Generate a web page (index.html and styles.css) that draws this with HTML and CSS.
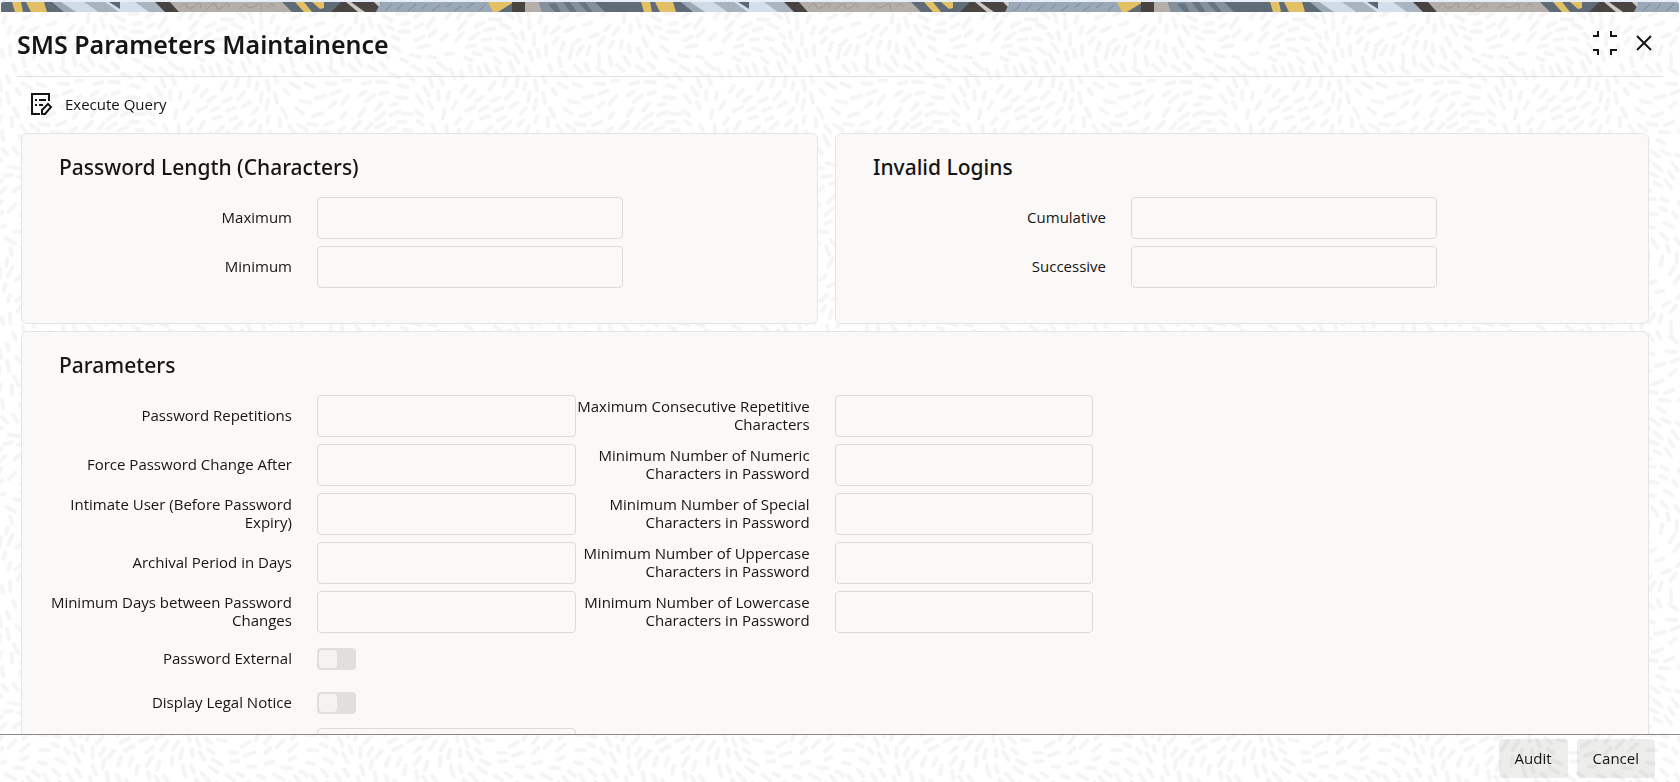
FILE: index.html
```html
<!DOCTYPE html>
<html lang="en">
<head>
    <meta charset="UTF-8">
    <meta name="viewport" content="width=device-width, initial-scale=1.0">
    <title>SMS Parameters Maintainence</title>
    <link rel="stylesheet" href="styles.css">
</head>
<body>
    <!-- Dash texture behind the whole window -->
    <svg class="texture" aria-hidden="true">
        <defs>
            <pattern id="dashes" width="268" height="268" patternUnits="userSpaceOnUse">
                <path id="dash-path" class="dash"/>
            </pattern>
        </defs>
        <rect width="100%" height="100%" fill="url(#dashes)"/>
    </svg>

    <div class="window">
        <!-- Decorative strip -->
        <svg class="strip" aria-hidden="true">
            <defs>
                <pattern id="strip" width="629" height="10" patternUnits="userSpaceOnUse">
                    <rect width="629" height="10" fill="#5f6c77"/>
                    <path d="M11 0h9l2 10h-8zM25 0h18l3 10H30z" fill="#e3c063"/>
                    <path d="M51 0h12l12 10H63z" fill="#9ba8b6"/>
                    <path d="M60 0h25l13 10H75z" fill="#d1dbe8"/>
                    <path d="M83 0h22l14 10H98z" fill="#a9b3be"/>
                    <path d="M104 0h38l10 10h-34z" fill="#d4dfed"/>
                    <path d="M108 0h11v7z" fill="#5b6772"/>
                    <path d="M134 0h22l10 10h-18z" fill="#aab5c1"/>
                    <path d="M154 0h15l9 10h-14z" fill="#484340"/>
                    <path d="M169 0h112l10 10H178z" fill="#b4ada8"/>
                    <path d="M178 6c5-5 8-5 8-2s5 3 9-1 6 0 4 3M206 7c5-5 9-7 9-3s6 3 9-1 5 1 3 3M238 7c4-5 8-6 8-3s6 2 10-1 5 0 4 4M266 5c4-4 7-4 7 0" fill="none" stroke="#9d968f"/>
                    <path d="M294 0h9l8 10h-8zM311 0h12v6l-4 1z" fill="#e3c063"/>
                    <path d="M340 0h38v10h-48z" fill="#4a4542"/>
                    <path d="M345 0h5l14 10h-7zM373 0h6v6z" fill="#cdc8c4"/>
                    <path d="M380 0h109l4 10H375z" fill="#9aa8b7"/>
                    <path d="M384 9l7-7M396 8l6-6M407 9l8-7M421 7l5-5M431 9l8-6M445 5l6-4M453 9l7-5M466 6l7-5M478 9l6-6" fill="none" stroke="#77869a"/>
                    <path d="M487 0h26l-16 10h-5z" fill="#e3c063"/>
                    <path d="M511 0h13v10h-13z" fill="#4a4441"/>
                    <path d="M524 0h14l3 10h-17z" fill="#b6aeaa"/>
                    <path d="M538 0h56l10 10h-63z" fill="#85909d"/>
                    <path d="M547 2l7 8h6l-5-9zM562 0l7 10h7l-7-10zM577 0l9 10h6l-8-10z" fill="#697580"/>
                </pattern>
            </defs>
            <rect width="100%" height="100%" fill="url(#strip)"/>
        </svg>

        <header class="titlebar">
            <h1>SMS Parameters Maintainence</h1>
            <div class="window-actions">
                <button type="button" class="icon-btn" aria-label="Restore">
                    <svg width="24" height="24" viewBox="0 0 24 24"><path d="M0 5h5V0M24 5h-6V0M0 19h5v5M24 19h-6v5"/></svg>
                </button>
                <button type="button" class="icon-btn" aria-label="Close">
                    <svg width="24" height="24" viewBox="0 0 24 24"><path d="M5 5l14 14M19 5L5 19"/></svg>
                </button>
            </div>
        </header>

        <div class="toolbar">
            <button type="button" class="tool-btn">
                <svg width="24" height="24" viewBox="0 0 24 24">
                    <path d="M11 22H3V2h17v7"/>
                    <path d="M6 8h2M10 8h7M6 13h2M10 13h4"/>
                    <path d="M13 22v-4l6-6 3 3-6 7z"/>
                </svg>
                Execute Query
            </button>
        </div>

        <main class="content">
            <div class="card-row">
                <section class="card">
                    <h2>Password Length (Characters)</h2>
                    <div class="fields fields-wide">
                        <div class="field">
                            <label for="maximum">Maximum</label>
                            <input type="text" id="maximum">
                        </div>
                        <div class="field">
                            <label for="minimum">Minimum</label>
                            <input type="text" id="minimum">
                        </div>
                    </div>
                </section>
                <section class="card">
                    <h2>Invalid Logins</h2>
                    <div class="fields fields-wide">
                        <div class="field">
                            <label for="cumulative">Cumulative</label>
                            <input type="text" id="cumulative">
                        </div>
                        <div class="field">
                            <label for="successive">Successive</label>
                            <input type="text" id="successive">
                        </div>
                    </div>
                </section>
            </div>

            <section class="card">
                <h2>Parameters</h2>
                <div class="columns">
                    <div class="fields">
                        <div class="field">
                            <label for="repetitions">Password Repetitions</label>
                            <input type="text" id="repetitions">
                        </div>
                        <div class="field">
                            <label for="force-change">Force Password Change After</label>
                            <input type="text" id="force-change">
                        </div>
                        <div class="field">
                            <label for="intimate">Intimate User (Before Password Expiry)</label>
                            <input type="text" id="intimate">
                        </div>
                        <div class="field">
                            <label for="archival">Archival Period in Days</label>
                            <input type="text" id="archival">
                        </div>
                        <div class="field">
                            <label for="min-days">Minimum Days between Password Changes</label>
                            <input type="text" id="min-days">
                        </div>
                        <div class="field field-switch">
                            <label for="external">Password External</label>
                            <input type="checkbox" id="external" class="switch">
                        </div>
                        <div class="field field-switch">
                            <label for="legal">Display Legal Notice</label>
                            <input type="checkbox" id="legal" class="switch">
                        </div>
                        <div class="field">
                            <span></span>
                            <input type="text">
                        </div>
                    </div>
                    <div class="fields">
                        <div class="field">
                            <label for="max-repeat">Maximum Consecutive Repetitive Characters</label>
                            <input type="text" id="max-repeat">
                        </div>
                        <div class="field">
                            <label for="min-numeric">Minimum Number of Numeric Characters in Password</label>
                            <input type="text" id="min-numeric">
                        </div>
                        <div class="field">
                            <label for="min-special">Minimum Number of Special Characters in Password</label>
                            <input type="text" id="min-special">
                        </div>
                        <div class="field">
                            <label for="min-upper">Minimum Number of Uppercase Characters in Password</label>
                            <input type="text" id="min-upper">
                        </div>
                        <div class="field">
                            <label for="min-lower">Minimum Number of Lowercase Characters in Password</label>
                            <input type="text" id="min-lower">
                        </div>
                    </div>
                </div>
            </section>
        </main>

        <footer class="footer">
            <button type="button" class="btn">Audit</button>
            <button type="button" class="btn">Cancel</button>
        </footer>
    </div>

    <script>
        // Fill the texture tile with short strokes that follow a repeating flow field
        const size = 268;
        const turn = Math.PI * 2 / size;
        let seed = 11;

        function random() {
            seed = (seed * 16807) % 2147483647;
            return seed / 2147483647;
        }

        function wrap(d) {
            return d - size * Math.round(d / size);
        }

        const dashes = [];
        for (let i = 0; i < 20000; i++) {
            const x = random() * size;
            const y = random() * size;
            const angle = 0.9 + 1.1 * Math.sin(turn * (x + y)) + 0.8 * Math.cos(turn * (2 * y - x)) + (random() - 0.5) * 0.3;
            const free = dashes.every(d => {
                const dx = wrap(x - d.x);
                const dy = wrap(y - d.y);
                const along = (dx * Math.cos(d.angle) + dy * Math.sin(d.angle)) / 15;
                const across = (dy * Math.cos(d.angle) - dx * Math.sin(d.angle)) / 8;
                return along * along + across * across > 1;
            });
            if (free) {
                dashes.push({ x, y, angle, half: 3 + random() * 2.5 });
            }
        }

        let path = '';
        for (const d of dashes) {
            const dx = Math.cos(d.angle) * d.half;
            const dy = Math.sin(d.angle) * d.half;
            // repeat on the far side so strokes continue across the tile edge
            for (const ox of [-size, 0, size]) {
                for (const oy of [-size, 0, size]) {
                    const x = d.x + ox;
                    const y = d.y + oy;
                    if (x > -10 && x < size + 10 && y > -10 && y < size + 10) {
                        path += `M${(x - dx).toFixed(1)} ${(y - dy).toFixed(1)}L${(x + dx).toFixed(1)} ${(y + dy).toFixed(1)}`;
                    }
                }
            }
        }
        document.getElementById('dash-path').setAttribute('d', path);
    </script>
</body>
</html>
```

FILE: styles.css
```css
/* Basic reset and font setup */
* {
    margin: 0;
    padding: 0;
    box-sizing: border-box;
}
body {
    font-family: "Open Sans", "Noto Sans", sans-serif;
    font-size: 15px;
    line-height: 18px;
    color: #161513;
    background-color: #fff;
}
button, input {
    font: inherit;
    color: inherit;
}

/* Background texture */
.texture {
    position: fixed;
    inset: 0;
    width: 100%;
    height: 100%;
    z-index: -1;
}
.dash {
    fill: none;
    stroke: #f5f5f5;
    stroke-width: 4;
    stroke-linecap: round;
}

/* Window frame */
.window {
    display: flex;
    flex-direction: column;
    height: 100vh;
}
.strip {
    flex: none;
    width: 100%;
    height: 12px;
    padding: 0 1px;
    border-top: 2px solid #e8eef8;
    border-radius: 4px 4px 0 0;
}

/* Title bar */
.titlebar {
    display: flex;
    justify-content: space-between;
    align-items: center;
    height: 65px;
    margin: 0 17px;
    border-bottom: 1px solid #e3e2e1;
}
h1, h2 {
    font-family: "Noto Sans", sans-serif;
}
h1 {
    font-size: 25px;
    line-height: 32px;
    font-weight: 600;
}
.window-actions {
    display: flex;
    gap: 15px;
    padding: 0 7px 2px 0;
}
.icon-btn {
    display: flex;
    border: 0;
    background: none;
}
.icon-btn svg, .tool-btn svg {
    fill: none;
    stroke: #161513;
    stroke-width: 2;
}

/* Toolbar */
.toolbar {
    display: flex;
    align-items: center;
    height: 56px;
    padding: 0 29px 2px;
}
.tool-btn {
    display: flex;
    align-items: center;
    gap: 12px;
    border: 0;
    background: none;
}

/* Scrolling content */
.content {
    flex: 1;
    min-height: 0;
    overflow-y: auto;
    scrollbar-width: none;
    padding: 0 31px 0 21px;
}
.card-row {
    display: grid;
    grid-template-columns: 1fr 1fr;
    margin-bottom: 7px;
}
.card-row .card:first-child {
    margin-right: 17px;
}
.card {
    padding: 19px 36px 35px 37px;
    background-color: #fbf9f8;
    border: 1px solid #e6e5e3;
    border-radius: 6px;
}
h2 {
    margin-bottom: 16px;
    font-size: 21px;
    line-height: 28px;
    font-weight: 500;
}

/* Fields */
.columns {
    display: grid;
    grid-template-columns: repeat(3, 1fr);
}
.fields {
    display: flex;
    flex-direction: column;
    gap: 7px;
}
.field {
    display: grid;
    grid-template-columns: 45% 50%;
    column-gap: 25px;
    align-items: center;
    min-height: 42px;
}
.fields-wide .field {
    grid-template-columns: 233px minmax(0, 306px);
}
.field label {
    margin-left: -16px;
    padding-bottom: 2px;
    text-align: right;
}
.field input[type="text"] {
    width: 100%;
    height: 42px;
    padding: 0 12px;
    background-color: transparent;
    border: 1px solid #dcdbd9;
    border-radius: 4px;
}
.field-switch {
    min-height: 37px;
}

/* Switch */
.switch {
    appearance: none;
    display: flex;
    width: 39px;
    height: 22px;
    padding: 2px;
    background-color: #e0dfdd;
    border-radius: 4px;
}
.switch::before {
    content: "";
    width: 18px;
    height: 18px;
    background-color: #f5f3f2;
    border-radius: 4px;
}
.switch:checked {
    justify-content: flex-end;
}

/* Footer */
.footer {
    display: flex;
    justify-content: flex-end;
    gap: 9px;
    padding: 4px 25px;
    border-top: 1px solid #8b8885;
}
.btn {
    height: 39px;
    padding: 0 16px 2px;
    background-color: rgba(22, 21, 19, 0.08);
    border: 0;
    border-radius: 4px;
}
```
